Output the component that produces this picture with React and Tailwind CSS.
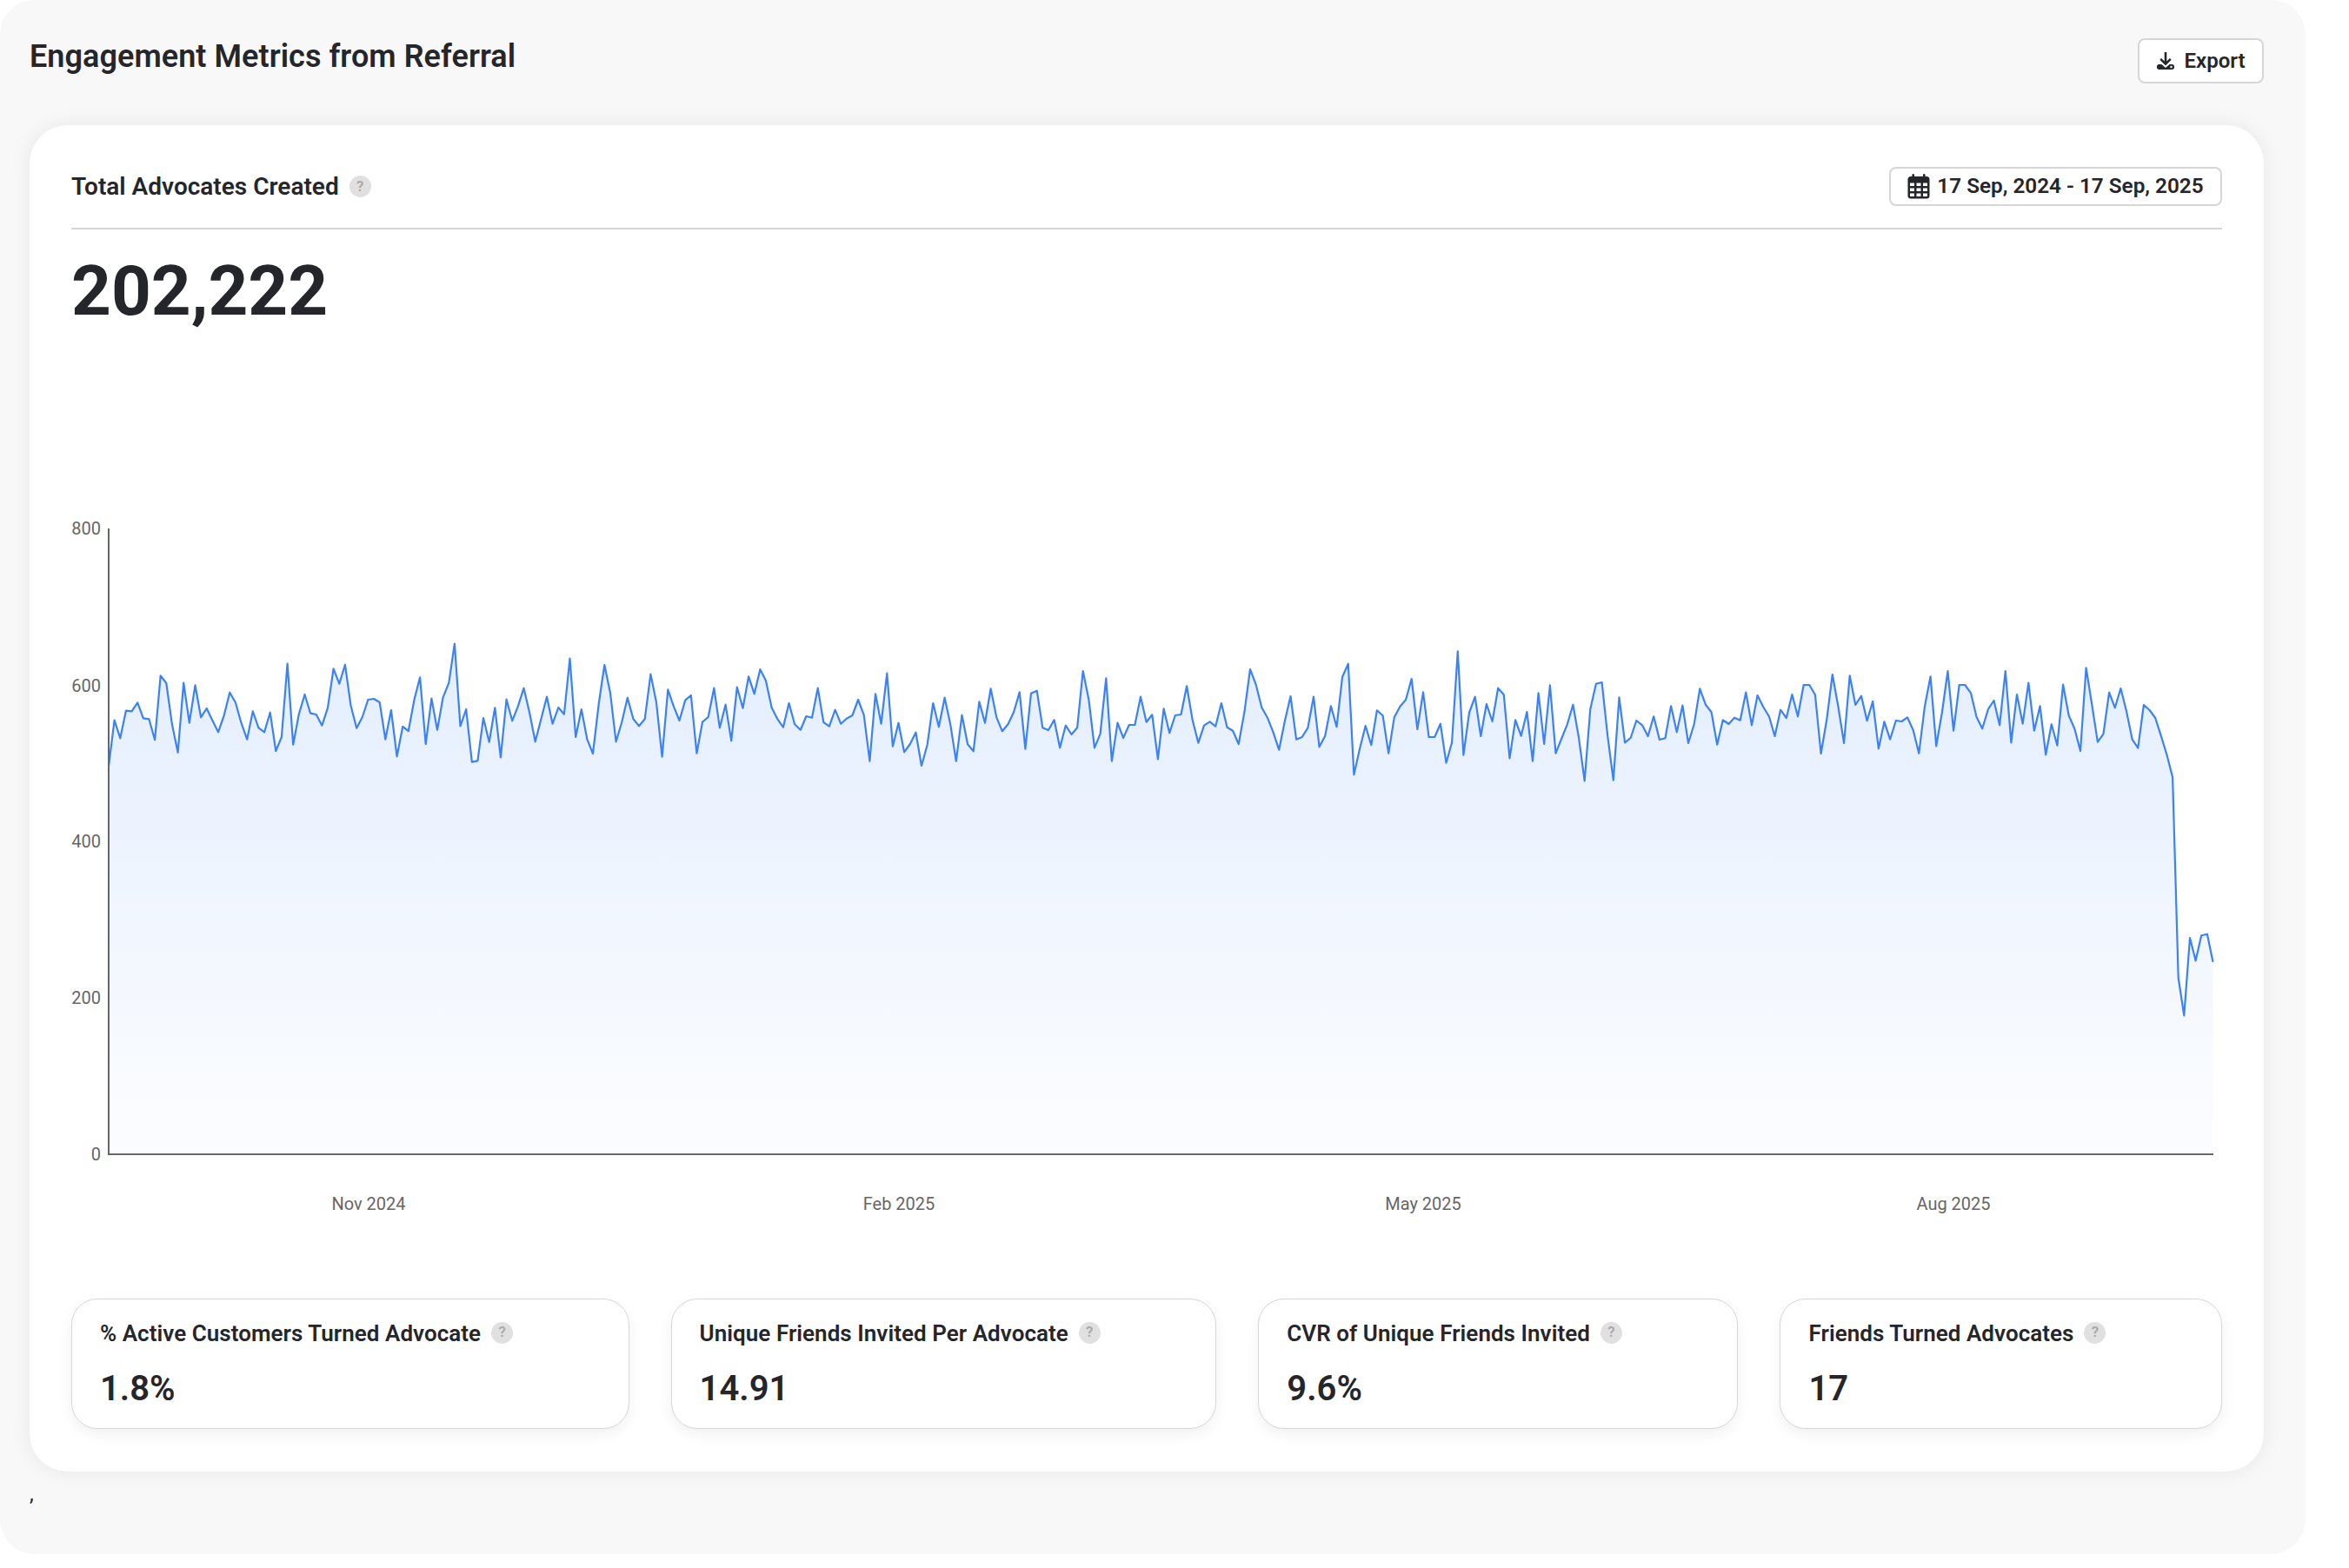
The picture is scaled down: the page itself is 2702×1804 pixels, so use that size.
import React from "react";

const Z = [485,326,388,293,295,265,319,322,394,172,198,340,437,197,335,205,316,285,327,367,310,230,265,335,392,295,352,367,299,432,384,131,410,305,237,302,306,344,283,148,200,134,275,353,315,255,252,264,392,291,451,348,363,255,178,408,251,359,247,197,62,346,288,470,466,318,401,283,454,254,328,278,215,300,400,322,245,338,282,305,113,384,288,392,441,270,135,230,400,333,248,322,346,322,167,265,452,220,278,327,257,240,440,332,315,215,352,272,397,212,284,175,235,150,190,282,322,350,267,340,359,312,317,215,333,347,290,338,320,309,255,308,467,235,338,164,416,335,436,408,368,483,410,267,349,248,340,467,308,409,433,262,335,217,316,364,340,298,229,425,233,224,352,360,325,421,344,375,352,156,255,421,373,181,467,335,387,342,342,245,332,307,460,286,370,309,306,208,325,404,344,331,347,267,350,362,408,298,150,203,282,317,368,428,330,243,392,384,352,245,418,380,277,349,176,131,514,425,345,412,292,310,440,316,278,255,183,357,229,384,384,338,473,403,88,446,300,245,381,270,330,215,238,457,325,380,297,467,232,408,205,440,390,340,272,385,535,287,200,195,380,533,247,403,387,327,343,381,313,393,388,277,367,275,405,340,217,272,298,410,325,339,317,326,230,343,240,280,313,381,290,318,237,313,204,204,238,441,325,168,280,405,172,273,242,328,261,424,331,392,327,330,316,360,440,280,175,415,300,156,362,204,204,232,315,355,288,258,343,156,403,237,338,197,362,277,445,340,413,203,310,355,432,145,270,401,373,230,283,216,295,392,422,273,291,318,380,445,523,1215,1345,1077,1156,1069,1064,1160];

const OX = 82;
const OY = 590;
const px = (i) => 125 + i * (2420.5 / 365) - OX;
const py = (z) => 720 + z / 3 - OY;
const BASE = 1328 - OY;
const line = Z.map((z, i) => `${px(i).toFixed(1)},${py(z).toFixed(1)}`).join(" ");
const area = `${px(0).toFixed(1)},${BASE} ${line} ${px(365).toFixed(1)},${BASE}`;

function Help() {
  return (
    <span className="flex h-[25px] w-[25px] shrink-0 items-center justify-center rounded-full bg-[#e0e0e0] text-[17px] font-semibold text-[#a9a9a9]">?</span>
  );
}

function Metric({ title, value }) {
  return (
    <div className="h-[150px] grow rounded-[30px] border-[1.5px] border-[#d6d6d6] bg-white pl-[32px] pr-[32px] shadow-[0_6px_16px_rgba(0,0,0,0.06)]">
      <div className="mt-[24px] flex items-center gap-[12px] pr-[98px]">
        <span className="whitespace-nowrap text-[26px] font-semibold leading-[30px] tracking-[0.04px]">{title}</span>
        <span className="-translate-y-[1px]">
          <Help />
        </span>
      </div>
      <div className="mt-[25px] text-[40px] font-semibold leading-[47px]">{value}</div>
    </div>
  );
}

function Chart() {
  return (
    <svg className="block" width="2474" height="820" viewBox="0 0 2474 820" fontFamily="Roboto, sans-serif">
      <defs>
        <linearGradient id="fill" x1="0" y1="0" x2="0" y2="1">
          <stop offset="0" stopColor="#e4eefe" />
          <stop offset="1" stopColor="#fcfdff" />
        </linearGradient>
      </defs>
      <polygon points={area} fill="url(#fill)" />
      <polyline points={line} fill="none" stroke="#3b82f6" strokeWidth="2.2" strokeLinejoin="round" />
      <line x1={125 - OX} y1={608 - OY} x2={125 - OX} y2={BASE + 1} stroke="#666" strokeWidth="2" />
      <line x1={125 - OX} y1={BASE} x2={2546 - OX} y2={BASE} stroke="#666" strokeWidth="2" />
      {[["800", 608], ["600", 789], ["400", 968], ["200", 1148], ["0", 1328]].map(([t, y]) => (
        <text key={t} x={116 - OX} y={y - OY + 7} textAnchor="end" fontSize="20" fill="#666">{t}</text>
      ))}
      {[["Nov 2024", 424], ["Feb 2025", 1034], ["May 2025", 1637], ["Aug 2025", 2247]].map(([t, x]) => (
        <text key={t} x={x - OX} y={1385 - OY + 7} textAnchor="middle" fontSize="20" fill="#666">{t}</text>
      ))}
    </svg>
  );
}

export default function App() {
  return (
    <div className="min-h-[1804px] bg-white font-['Roboto',sans-serif] text-[#25262b]">
      <div className="h-[1788px] w-[2652px] rounded-[40px] bg-[#f8f8f8] pl-[34px] pr-[48px]">
        <div className="flex h-[144px] items-start justify-between">
          <h1 className="mt-[44px] text-[36px] font-semibold leading-[42px] tracking-[0.06px]">Engagement Metrics from Referral</h1>
          <button className="mt-[44px] flex h-[52px] w-[145px] items-center justify-center gap-[10px] rounded-[8px] border-2 border-[#d6d6d6] bg-white text-[24px] font-semibold">
            <svg width="22" height="22" viewBox="0 0 22 22" fill="#25262b">
              <path d="M9.700 1h2.600v10.500l3.600-3.600 1.800 1.800L11 16.500 4.300 9.700l1.800-1.800 3.600 3.600z" />
              <path d="M1 17.500C1 16 2 15 3.500 15h3L11 19l4.500-4h3c1.500 0 2.500 1 2.500 2.500v1C21 20 20 21 18.500 21h-15C2 21 1 20 1 18.500z" />
              <circle cx="17.500" cy="18" r="1.200" fill="#fff" />
            </svg>
            Export
          </button>
        </div>
        <div className="h-[1549px] rounded-[44px] bg-white px-[48px] pt-[48px] shadow-[0_0_24px_rgba(0,0,0,0.07)]">
          <div className="flex items-center justify-between border-b-2 border-[#d6d6d6] pb-[25px]">
            <div className="flex items-center gap-[12px]">
              <span className="text-[28px] font-semibold leading-[33px]">Total Advocates Created</span>
              <Help />
            </div>
            <div className="flex h-[45px] w-[383px] items-center justify-center gap-[8px] rounded-[8px] border-2 border-[#d6d6d6] text-[24.3px] font-semibold">
              <svg width="26" height="29" viewBox="0 0 26 29">
                <rect x="0.500" y="3" width="25" height="25.500" rx="3.500" fill="#25262b" />
                <rect x="5.500" y="0" width="2.500" height="5" rx="1.250" fill="#25262b" />
                <rect x="18" y="0" width="2.500" height="5" rx="1.250" fill="#25262b" />
                {[10.500, 16.500, 22.500].map((y) => [3, 10.500, 18].map((x) => (
                  <rect key={`${x}-${y}`} x={x} y={y} width="5" height="3.500" fill="#fff" />
                )))}
              </svg>
              17 Sep, 2024 - 17 Sep, 2025
            </div>
          </div>
          <div className="mt-[23px] text-[80px] font-bold leading-[96px]">202,222</div>
          <div className="mt-[207px]">
            <Chart />
          </div>
          <div className="mt-[84px] flex gap-[48px]">
            <Metric title="% Active Customers Turned Advocate" value="1.8%" />
            <Metric title="Unique Friends Invited Per Advocate" value="14.91" />
            <Metric title="CVR of Unique Friends Invited" value="9.6%" />
            <Metric title="Friends Turned Advocates" value="17" />
          </div>
        </div>
        <div className="mt-[12px] text-[24px] leading-[28px]">,</div>
      </div>
    </div>
  );
}
